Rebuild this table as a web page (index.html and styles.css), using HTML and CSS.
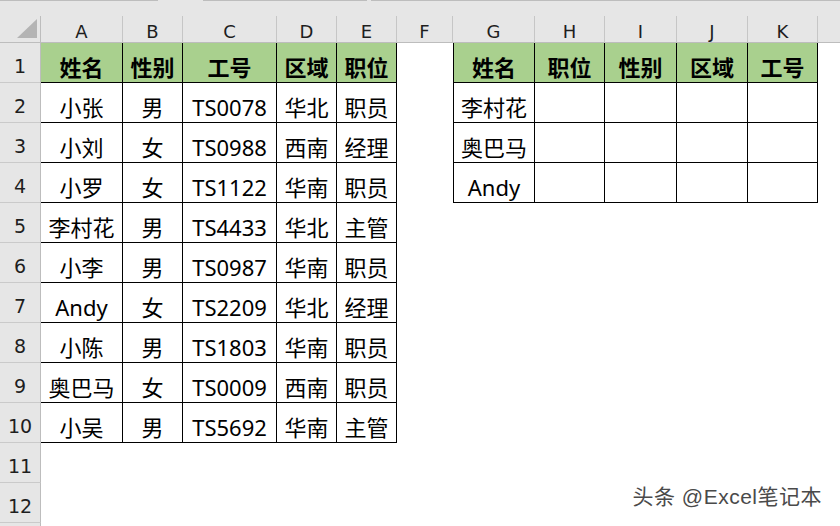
FILE: index.html
```html
<!DOCTYPE html>
<html lang="zh-CN">
<head>
<meta charset="utf-8">
<title>Excel</title>
<link rel="stylesheet" href="styles.css">
</head>
<body>
<div class="sheet">
  <div class="topbar"><span class="seg s1"></span><span class="seg s2"></span><span class="seg s3"></span></div>
  <div class="grid">
    <!-- column headers -->
    <div class="ch corner"><span class="tri"></span></div>
    <div class="ch">A</div><div class="ch">B</div><div class="ch">C</div><div class="ch">D</div><div class="ch">E</div><div class="ch">F</div><div class="ch">G</div><div class="ch">H</div><div class="ch">I</div><div class="ch">J</div><div class="ch">K</div><div class="ch last"></div>

    <!-- row 1 -->
    <div class="rh">1</div>
    <div class="d t hd">姓名</div><div class="d t hd">性别</div><div class="d t hd">工号</div><div class="d t hd">区域</div><div class="d t hd">职位</div>
    <div class="d"></div>
    <div class="d t gl hd">姓名</div><div class="d t hd">职位</div><div class="d t hd">性别</div><div class="d t hd">区域</div><div class="d t hd">工号</div>
    <div class="d"></div>

    <!-- row 2 -->
    <div class="rh">2</div>
    <div class="d t">小张</div><div class="d t">男</div><div class="d t">TS0078</div><div class="d t">华北</div><div class="d t">职员</div>
    <div class="d"></div>
    <div class="d t gl">李村花</div><div class="d t"></div><div class="d t"></div><div class="d t"></div><div class="d t"></div>
    <div class="d"></div>

    <!-- row 3 -->
    <div class="rh">3</div>
    <div class="d t">小刘</div><div class="d t">女</div><div class="d t">TS0988</div><div class="d t">西南</div><div class="d t">经理</div>
    <div class="d"></div>
    <div class="d t gl">奥巴马</div><div class="d t"></div><div class="d t"></div><div class="d t"></div><div class="d t"></div>
    <div class="d"></div>

    <!-- row 4 -->
    <div class="rh">4</div>
    <div class="d t">小罗</div><div class="d t">女</div><div class="d t">TS1122</div><div class="d t">华南</div><div class="d t">职员</div>
    <div class="d"></div>
    <div class="d t gl">Andy</div><div class="d t"></div><div class="d t"></div><div class="d t"></div><div class="d t"></div>
    <div class="d"></div>

    <!-- row 5 -->
    <div class="rh">5</div>
    <div class="d t">李村花</div><div class="d t">男</div><div class="d t">TS4433</div><div class="d t">华北</div><div class="d t">主管</div>
    <div class="d"></div><div class="d"></div><div class="d"></div><div class="d"></div><div class="d"></div><div class="d"></div><div class="d"></div>

    <!-- row 6 -->
    <div class="rh">6</div>
    <div class="d t">小李</div><div class="d t">男</div><div class="d t">TS0987</div><div class="d t">华南</div><div class="d t">职员</div>
    <div class="d"></div><div class="d"></div><div class="d"></div><div class="d"></div><div class="d"></div><div class="d"></div><div class="d"></div>

    <!-- row 7 -->
    <div class="rh">7</div>
    <div class="d t">Andy</div><div class="d t">女</div><div class="d t">TS2209</div><div class="d t">华北</div><div class="d t">经理</div>
    <div class="d"></div><div class="d"></div><div class="d"></div><div class="d"></div><div class="d"></div><div class="d"></div><div class="d"></div>

    <!-- row 8 -->
    <div class="rh">8</div>
    <div class="d t">小陈</div><div class="d t">男</div><div class="d t">TS1803</div><div class="d t">华南</div><div class="d t">职员</div>
    <div class="d"></div><div class="d"></div><div class="d"></div><div class="d"></div><div class="d"></div><div class="d"></div><div class="d"></div>

    <!-- row 9 -->
    <div class="rh">9</div>
    <div class="d t">奥巴马</div><div class="d t">女</div><div class="d t">TS0009</div><div class="d t">西南</div><div class="d t">职员</div>
    <div class="d"></div><div class="d"></div><div class="d"></div><div class="d"></div><div class="d"></div><div class="d"></div><div class="d"></div>

    <!-- row 10 -->
    <div class="rh">10</div>
    <div class="d t">小吴</div><div class="d t">男</div><div class="d t">TS5692</div><div class="d t">华南</div><div class="d t">主管</div>
    <div class="d"></div><div class="d"></div><div class="d"></div><div class="d"></div><div class="d"></div><div class="d"></div><div class="d"></div>

    <!-- row 11 -->
    <div class="rh">11</div>
    <div class="d"></div><div class="d"></div><div class="d"></div><div class="d"></div><div class="d"></div><div class="d"></div><div class="d"></div><div class="d"></div><div class="d"></div><div class="d"></div><div class="d"></div><div class="d"></div>

    <!-- row 12 -->
    <div class="rh">12</div>
    <div class="d"></div><div class="d"></div><div class="d"></div><div class="d"></div><div class="d"></div><div class="d"></div><div class="d"></div><div class="d"></div><div class="d"></div><div class="d"></div><div class="d"></div><div class="d"></div>

    <!-- row 13 -->
    <div class="rh"></div>
    <div class="d"></div><div class="d"></div><div class="d"></div><div class="d"></div><div class="d"></div><div class="d"></div><div class="d"></div><div class="d"></div><div class="d"></div><div class="d"></div><div class="d"></div><div class="d"></div>
  </div>
  <div class="watermark">头条 @Excel笔记本</div>
</div>
</body>
</html>
```

FILE: styles.css
```css
html, body {
  margin: 0;
  padding: 0;
  background: #ffffff;
  overflow: hidden;
}

.sheet {
  position: relative;
  width: 840px;
  height: 526px;
  overflow: hidden;
  background: #ffffff;
  font-family: "Noto Sans", "Noto Sans CJK SC", sans-serif;
}

.topbar {
  height: 16px;
  background: #e6e6e6;
  display: flex;
  align-items: flex-start;
}

.seg {
  height: 1px;
  background: #bdbdbd;
}

.s1 { width: 158px; }
.s2 { width: 164px; margin-left: 45px; }
.s3 { flex: 1; margin-left: 4px; }

.grid {
  display: grid;
  grid-template-columns: 41px 82px 60px 94px 60px 60px 56px 82px 70px 72px 71px 70px 1fr;
  grid-template-rows: 27px repeat(13, 40px);
}

.grid > div {
  box-sizing: border-box;
  display: flex;
  align-items: center;
  justify-content: center;
  line-height: 1;
  white-space: nowrap;
  overflow: hidden;
}

.ch {
  background: #e6e6e6;
  border-right: 1px solid #c6c6c6;
  border-bottom: 1px solid #bdbdbd;
  font-family: "DejaVu Sans", sans-serif;
  font-size: 18px;
  color: #1e1e1e;
  padding-top: 5px;
}

.ch.last {
  border-right: none;
}

.grid > .corner {
  justify-content: flex-end;
  align-items: flex-end;
  padding: 0 3px 4px 0;
  border-right: 1px solid #bdbdbd;
}

.tri {
  display: block;
  width: 20px;
  height: 19px;
  background: #b4b4b4;
  clip-path: polygon(100% 0, 100% 100%, 0 100%);
}

.rh {
  background: #e6e6e6;
  border-right: 1px solid #bdbdbd;
  border-bottom: 1px solid #cacaca;
  font-family: "DejaVu Sans", sans-serif;
  font-size: 19px;
  color: #1e1e1e;
  padding-top: 7px;
}

.d {
  font-size: 22px;
  color: #000000;
  padding-top: 8px;
}

.t {
  border-right: 1px solid #000000;
  border-bottom: 1px solid #000000;
}

.gl {
  border-left: 1px solid #000000;
}

.hd {
  background: #a9d08e;
  font-weight: 700;
}

.watermark {
  position: absolute;
  right: 18px;
  top: 486px;
  font-family: "Liberation Sans", "Noto Sans CJK SC", sans-serif;
  font-size: 21px;
  line-height: 1;
  letter-spacing: 0.5px;
  color: #4a4a4a;
  text-shadow: 0 0 2px #ffffff, 0 0 1px #ffffff;
}
```
